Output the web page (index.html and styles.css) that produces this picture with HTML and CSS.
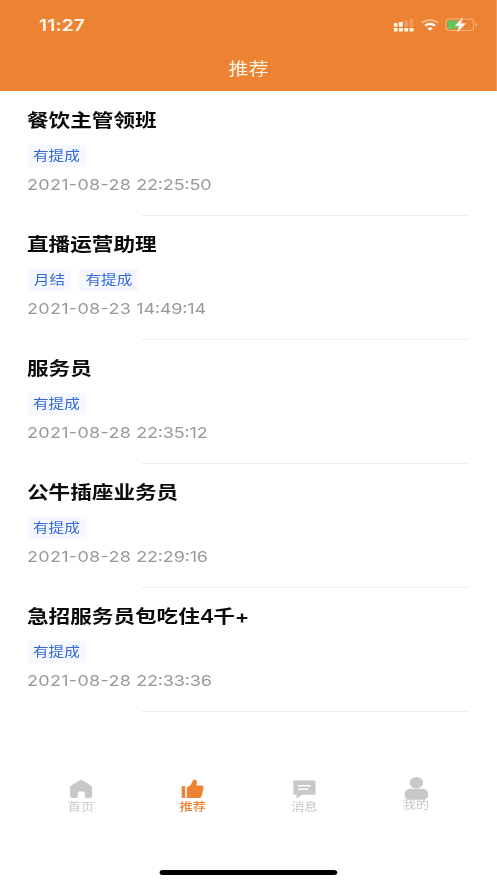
FILE: index.html
```html
<!DOCTYPE html>
<html lang="zh-CN">
<head>
<meta charset="utf-8">
<title>推荐</title>
<link rel="stylesheet" href="styles.css">
</head>
<body>
<div class="app">
  <header class="header">
    <div class="status">
      <span class="clock">11:27</span>
      <svg class="status-icons" width="70" height="16" viewBox="0 0 84 16" preserveAspectRatio="none">
        <g fill="#fff6e6"><rect x="0" y="11" width="4" height="3.6" rx=".6"/><rect x="5.3" y="11" width="4" height="3.6" rx=".6"/><rect x="10.6" y="11" width="4" height="3.6" rx=".6"/><rect x="15.9" y="11" width="4" height="3.6" rx=".6"/><rect x="0" y="6" width="4" height="3.8" rx=".6"/><rect x="5.3" y="5" width="4" height="4.8" rx=".6"/></g>
        <g fill="#f09a5c"><rect x="10.8" y="3.4" width="3.6" height="6.4" rx=".6"/><rect x="16.1" y="2" width="3.6" height="7.8" rx=".6"/></g>
        <path d="M28.5 5.8Q36.500 .2 44.500 5.800" fill="none" stroke="#f5b585" stroke-width="2"/>
        <path d="M31.500 8.700Q36.500 5.200 41.500 8.700" fill="none" stroke="#fff" stroke-width="2.200"/>
        <path d="M33.800 11.200Q36.500 9.300 39.200 11.200L36.500 13.700Z" fill="#fff"/>
        <rect x="52.500" y="2" width="27.500" height="11.600" rx="3" fill="none" stroke="#f4b484"/>
        <rect x="54" y="3.500" width="9.500" height="8.600" rx="1.500" fill="#5fc75c"/>
        <path d="M82 6v3.600q1.600-.5 1.600-1.800T82 6z" fill="#f4b484"/>
        <path d="M68.500 1.500L61.500 8.800h4.600L64 14.500l7.800-7.800h-4.900z" fill="#fff" stroke="#fff" stroke-width=".6"/>
      </svg>
    </div>
    <h1 class="page-title">推荐</h1>
  </header>
  <main class="list">
    <article class="job"><h2>餐饮主管领班</h2><div class="tags"><span>有提成</span></div><time><span class="day">2021-08-28</span> <span class="hour">22:25:50</span></time></article>
    <article class="job"><h2>直播运营助理</h2><div class="tags"><span class="short">月结</span><span>有提成</span></div><time><span class="day">2021-08-23</span> <span class="hour">14:49:14</span></time></article>
    <article class="job"><h2>服务员</h2><div class="tags"><span>有提成</span></div><time><span class="day">2021-08-28</span> <span class="hour">22:35:12</span></time></article>
    <article class="job"><h2>公牛插座业务员</h2><div class="tags"><span>有提成</span></div><time><span class="day">2021-08-28</span> <span class="hour">22:29:16</span></time></article>
    <article class="job"><h2>急招服务员包吃住<span class="latin">4</span>千<span class="latin">+</span></h2><div class="tags"><span>有提成</span></div><time><span class="day">2021-08-28</span> <span class="hour">22:33:36</span></time></article>
  </main>
  <nav class="tabs">
    <a class="tab">
      <svg width="20" height="24" viewBox="0 0 24 24" preserveAspectRatio="none"><path d="M9.700 3.400Q11.500 2.200 13.300 3.400L21 8.200Q22.500 9.200 22.500 10.800V18.500Q22.500 21 20 21H15.300V17.500Q15.300 14.300 11.700 14.300T8.100 17.500V21H3Q.5 21 .5 18.500V10.800Q.5 9.200 2 8.200Z"/></svg>
      <span>首页</span>
    </a>
    <a class="tab active">
      <svg width="20" height="24" viewBox="0 0 24 24" preserveAspectRatio="none"><path d="M1.700 9H4V21H1.700Q.4 21 .4 19.800V10.200Q.4 9 1.700 9ZM5.600 21V10.300Q9.700 8.900 11.100 4.500Q11.900 2.200 13.800 2.500Q16.300 3 15.600 6.500L15 8.500H20.300Q22.800 8.500 22.300 11L20.600 18.500Q20 21 17.800 21Z"/></svg>
      <span>推荐</span>
    </a>
    <a class="tab">
      <svg width="20" height="24" viewBox="0 0 24 24" preserveAspectRatio="none"><path d="M1.800 3.500H21.500Q22.700 3.500 22.700 4.800V16.500Q22.700 17.800 21.500 17.800H9L3.800 21.800V17.800H1.800Q.5 17.800 .5 16.500V4.800Q.5 3.500 1.800 3.500Z"/><path class="cut" d="M5.500 8.700H18M5.500 12.300H15.500"/></svg>
      <span>消息</span>
    </a>
    <a class="tab profile">
      <svg width="20" height="24" viewBox="0 0 24 24" preserveAspectRatio="none"><ellipse cx="12" cy="6.700" rx="6.800" ry="5.700"/><rect x="0" y="12.800" width="24" height="11" rx="5.400"/></svg>
      <span>我的</span>
    </a>
  </nav>
  <div class="home-bar"></div>
</div>
</body>
</html>
```
FILE: styles.css
```css
* { box-sizing: border-box; }

body {
  margin: 0;
  overflow: hidden;
  background: #fff;
  font-family: Inter, "Noto Sans CJK SC", sans-serif;
}

/* 414pt design width stretched across the viewport */
.app {
  width: 414.17px;
  height: 883px;
  display: flex;
  flex-direction: column;
  transform: scaleX(1.2);
  transform-origin: 0 0;
}

.header {
  height: 91px;
  background: #ec8232;
  color: #fff6e6;
}

.status {
  height: 48px;
  padding: 1px 16.5px 0 32.5px;
  display: flex;
  align-items: center;
  justify-content: space-between;
}

.clock {
  font-size: 16px;
  font-weight: 600;
  letter-spacing: 0.1px;
}

.page-title {
  margin: 0;
  text-align: center;
  font-size: 16.7px;
  font-weight: 400;
  line-height: 43px;
}

.list { height: 621px; }

.job {
  height: 124px;
  padding: 16px 0 0 22.5px;
  position: relative;
}

.job::after {
  content: "";
  position: absolute;
  left: 117.5px;
  right: 23.5px;
  bottom: -1px;
  height: 1px;
  background: #efefef;
}

.job h2 {
  margin: 0;
  height: 38px;
  font-size: 18px;
  font-weight: 700;
  line-height: 28px;
  color: #0b0b0b;
}

.job .latin {
  font-weight: 600;
  letter-spacing: -0.8px;
}

.tags {
  display: flex;
  gap: 7px;
  height: 22px;
}

.tags span {
  padding: 0 5px;
  background: #f5f9ff;
  color: #3468dc;
  font-size: 13px;
  line-height: 21px;
}

.tags .short { padding: 0 5px 0 5.7px; }

.job time {
  display: block;
  font-size: 15px;
  line-height: 35px;
  color: #999;
  font-feature-settings: "case";
}

.day { letter-spacing: 0.25px; }
.hour { letter-spacing: -0.15px; }

.tabs {
  height: 106px;
  padding: 65px 21px 0;
  display: flex;
}

.tab {
  flex: 1;
  display: flex;
  flex-direction: column;
  align-items: center;
  color: #c8c8c8;
}

.tab svg { fill: currentColor; }

.tab .cut {
  fill: none;
  stroke: #fff;
  stroke-width: 1.5;
}

.tab span {
  font-size: 11px;
  line-height: 13px;
}

.tab.active { color: #ec8232; }
.tab.active span { font-weight: 500; }
.tab.profile { margin-top: -1px; }
.tab.profile span { margin-top: -1px; }

.home-bar {
  width: 148px;
  height: 5px;
  margin: 52px auto 0;
  border-radius: 2.5px;
  background: #000;
}
```
